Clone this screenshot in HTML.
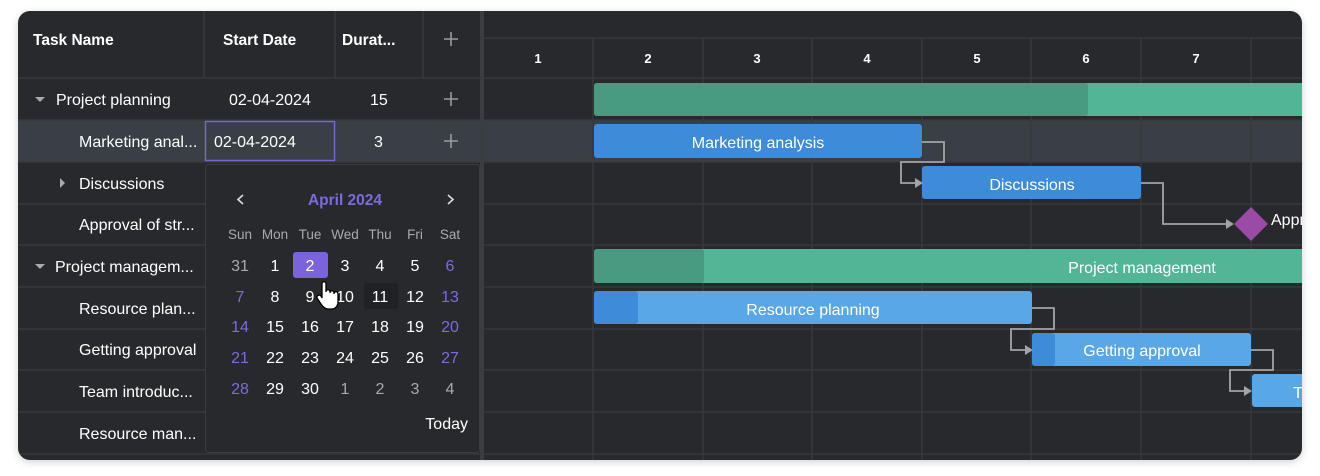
<!DOCTYPE html>
<html><head><meta charset="utf-8"><style>
html,body{margin:0;padding:0;background:#fff;}
svg{display:block;font-family:"Liberation Sans","DejaVu Sans",sans-serif;}
</style></head><body>
<svg width="1320" height="476" viewBox="0 0 1320 476" xmlns="http://www.w3.org/2000/svg">
<defs><clipPath id="c"><rect x="18" y="11" width="1284" height="449" rx="12"/></clipPath>
<filter id="s" x="-5%" y="-10%" width="110%" height="120%"><feGaussianBlur stdDeviation="4"/></filter></defs>
<rect x="18" y="13" width="1284" height="449" rx="12" fill="#000" opacity="0.18" filter="url(#s)"/>
<rect x="18" y="11" width="1284" height="449" rx="12" fill="#27292c"/>
<g clip-path="url(#c)">
<rect x="18" y="120" width="1290" height="42" fill="#3a3e45"/>
<g stroke="#36383c" stroke-width="1.5">
<line x1="18" y1="78" x2="1302" y2="78"/>
<line x1="484" y1="38" x2="1302" y2="38"/>
<line x1="18" y1="120" x2="1302" y2="120"/>
<line x1="18" y1="162" x2="1302" y2="162"/>
<line x1="18" y1="204" x2="1302" y2="204"/>
<line x1="18" y1="245" x2="1302" y2="245"/>
<line x1="18" y1="287" x2="1302" y2="287"/>
<line x1="18" y1="329" x2="1302" y2="329"/>
<line x1="18" y1="370" x2="1302" y2="370"/>
<line x1="18" y1="412" x2="1302" y2="412"/>
<line x1="18" y1="454" x2="1302" y2="454"/>
<line x1="204" y1="11" x2="204" y2="78"/>
<line x1="335" y1="11" x2="335" y2="78"/>
<line x1="423" y1="11" x2="423" y2="78"/>
<line x1="593" y1="38" x2="593" y2="460"/>
<line x1="703" y1="38" x2="703" y2="460"/>
<line x1="812" y1="38" x2="812" y2="460"/>
<line x1="922" y1="38" x2="922" y2="460"/>
<line x1="1031" y1="38" x2="1031" y2="460"/>
<line x1="1141" y1="38" x2="1141" y2="460"/>
<line x1="1251" y1="38" x2="1251" y2="460"/>
</g>
<rect x="480" y="11" width="4" height="449" fill="#3a3d42"/>
<g fill="#fff" font-size="15.5" font-weight="bold">
<text x="33" y="45">Task Name</text>
<text x="223" y="45">Start Date</text>
<text x="342" y="45">Durat...</text>
</g>
<g fill="#fff" font-size="13" font-weight="bold" text-anchor="middle">
<text x="538" y="63">1</text><text x="648" y="63">2</text><text x="757" y="63">3</text><text x="867" y="63">4</text><text x="977" y="63">5</text><text x="1086" y="63">6</text><text x="1196" y="63">7</text>
</g>
<g stroke="#9a9ca0" stroke-width="1.6">
<path d="M451 32v14M444 39h14"/>
<path d="M451 92v14M444 99h14"/>
<path d="M451 134v14M444 141h14"/>
</g>
<path d="M35 97l5 5 5-5z" fill="#aaa"/>
<path d="M35 264l5 5 5-5z" fill="#aaa"/>
<path d="M60 178l5 5-5 5z" fill="#aaa"/>
<g fill="#fff" font-size="16">
<text x="56" y="105">Project planning</text>
<text x="229" y="105">02-04-2024</text>
<text x="370" y="105">15</text>
<text x="79" y="147">Marketing anal...</text>
<text x="214" y="147">02-04-2024</text>
<text x="374" y="147">3</text>
<text x="79" y="189">Discussions</text>
<text x="79" y="230">Approval of str...</text>
<text x="55" y="272">Project managem...</text>
<text x="79" y="314">Resource plan...</text>
<text x="79" y="355">Getting approval</text>
<text x="79" y="397">Team introduc...</text>
<text x="79" y="439">Resource man...</text>
</g>
<rect x="205.5" y="121.5" width="129" height="39" fill="none" stroke="#7565d6" stroke-width="1.5"/>
<rect x="205.5" y="164.5" width="274" height="288" rx="3" fill="#27292c" stroke="#3a3c40"/>
<path d="M243 195l-5 4.5 5 4.5M448 195l5 4.5-5 4.5" stroke="#ddd" stroke-width="1.6" fill="none"/>
<text x="345" y="205" fill="#7d6ae0" font-size="15.5" font-weight="bold" text-anchor="middle">April 2024</text>
<g fill="#aaa" font-size="13.5" text-anchor="middle">
<text x="240" y="239">Sun</text><text x="275" y="239">Mon</text><text x="310" y="239">Tue</text><text x="345" y="239">Wed</text><text x="380" y="239">Thu</text><text x="415" y="239">Fri</text><text x="450" y="239">Sat</text>
</g>
<rect x="293" y="252" width="35" height="26" rx="3" fill="#7a63db"/>
<rect x="364" y="283" width="34" height="26" rx="3" fill="#1f2124"/>
<g font-size="16" text-anchor="middle" fill="#fff">
<text x="240" y="271" fill="#aaa">31</text><text x="275" y="271">1</text><text x="310" y="271">2</text><text x="345" y="271">3</text><text x="380" y="271">4</text><text x="415" y="271">5</text><text x="450" y="271" fill="#7d6ae0">6</text>
<text x="240" y="302" fill="#7d6ae0">7</text><text x="275" y="302">8</text><text x="310" y="302">9</text><text x="345" y="302">10</text><text x="380" y="302">11</text><text x="415" y="302">12</text><text x="450" y="302" fill="#7d6ae0">13</text>
<text x="240" y="332" fill="#7d6ae0">14</text><text x="275" y="332">15</text><text x="310" y="332">16</text><text x="345" y="332">17</text><text x="380" y="332">18</text><text x="415" y="332">19</text><text x="450" y="332" fill="#7d6ae0">20</text>
<text x="240" y="363" fill="#7d6ae0">21</text><text x="275" y="363">22</text><text x="310" y="363">23</text><text x="345" y="363">24</text><text x="380" y="363">25</text><text x="415" y="363">26</text><text x="450" y="363" fill="#7d6ae0">27</text>
<text x="240" y="394" fill="#7d6ae0">28</text><text x="275" y="394">29</text><text x="310" y="394">30</text><text x="345" y="394" fill="#aaa">1</text><text x="380" y="394" fill="#aaa">2</text><text x="415" y="394" fill="#aaa">3</text><text x="450" y="394" fill="#aaa">4</text>
</g>
<text x="468" y="429" fill="#fff" font-size="16" text-anchor="end">Today</text>
<path d="M322 284c0-3 4-3 4 0v8c0-3 4-3 4 0v1c0-3 4-3 4 0v1c0-3 4-3 4 0v8c0 4-3 7-6 7h-4c-3 0-5-2-7-5l-4-6c-1-2 2-4 4-2l1 2z" fill="#fff" stroke="#000" stroke-width="1.3"/>
<rect x="594" y="83" width="720" height="33" rx="3" fill="#52b595"/>
<rect x="594" y="83" width="494" height="33" rx="3" fill="#489b80"/>
<rect x="594" y="249" width="720" height="34" rx="3" fill="#52b595"/>
<rect x="594" y="249" width="110" height="34" rx="3" fill="#489b80"/>
<rect x="594" y="124" width="328" height="34" rx="3" fill="#3d8bd9"/>
<rect x="922" y="166" width="219" height="33" rx="3" fill="#3d8bd9"/>
<rect x="594" y="291" width="438" height="33" rx="3" fill="#59a7e7"/>
<rect x="594" y="291" width="44" height="33" rx="3" fill="#3d8bd9"/>
<rect x="1032" y="333" width="219" height="33" rx="3" fill="#59a7e7"/>
<rect x="1032" y="333" width="23" height="33" rx="3" fill="#3d8bd9"/>
<rect x="1252" y="374" width="60" height="33" rx="3" fill="#59a7e7"/>
<path d="M1251 207l17 17-17 17-17-17z" fill="#9b4aa8"/>
<g fill="#fff" font-size="16" text-anchor="middle">
<text x="758" y="148">Marketing analysis</text>
<text x="1032" y="190">Discussions</text>
<text x="1142" y="273">Project management</text>
<text x="813" y="315">Resource planning</text>
<text x="1142" y="356">Getting approval</text>
<text x="1298" y="398">T</text>
</g>
<text x="1271" y="225" fill="#fff" font-size="16">Appr</text>
<g stroke="#a2a4a8" stroke-width="1.8" fill="none">
<path d="M922 142h22v20h-43v21h14"/>
<path d="M1141 183h22v41h63"/>
<path d="M1032 308h22v21h-43v21h14"/>
<path d="M1251 350h22v20h-43v21h14"/>
</g>
<g fill="#a2a4a8">
<path d="M915 178l8 5-8 5z"/>
<path d="M1226 219l8 5-8 5z"/>
<path d="M1025 345l8 5-8 5z"/>
<path d="M1244 386l8 5-8 5z"/>
</g>
</g>
</svg>
</body></html>
